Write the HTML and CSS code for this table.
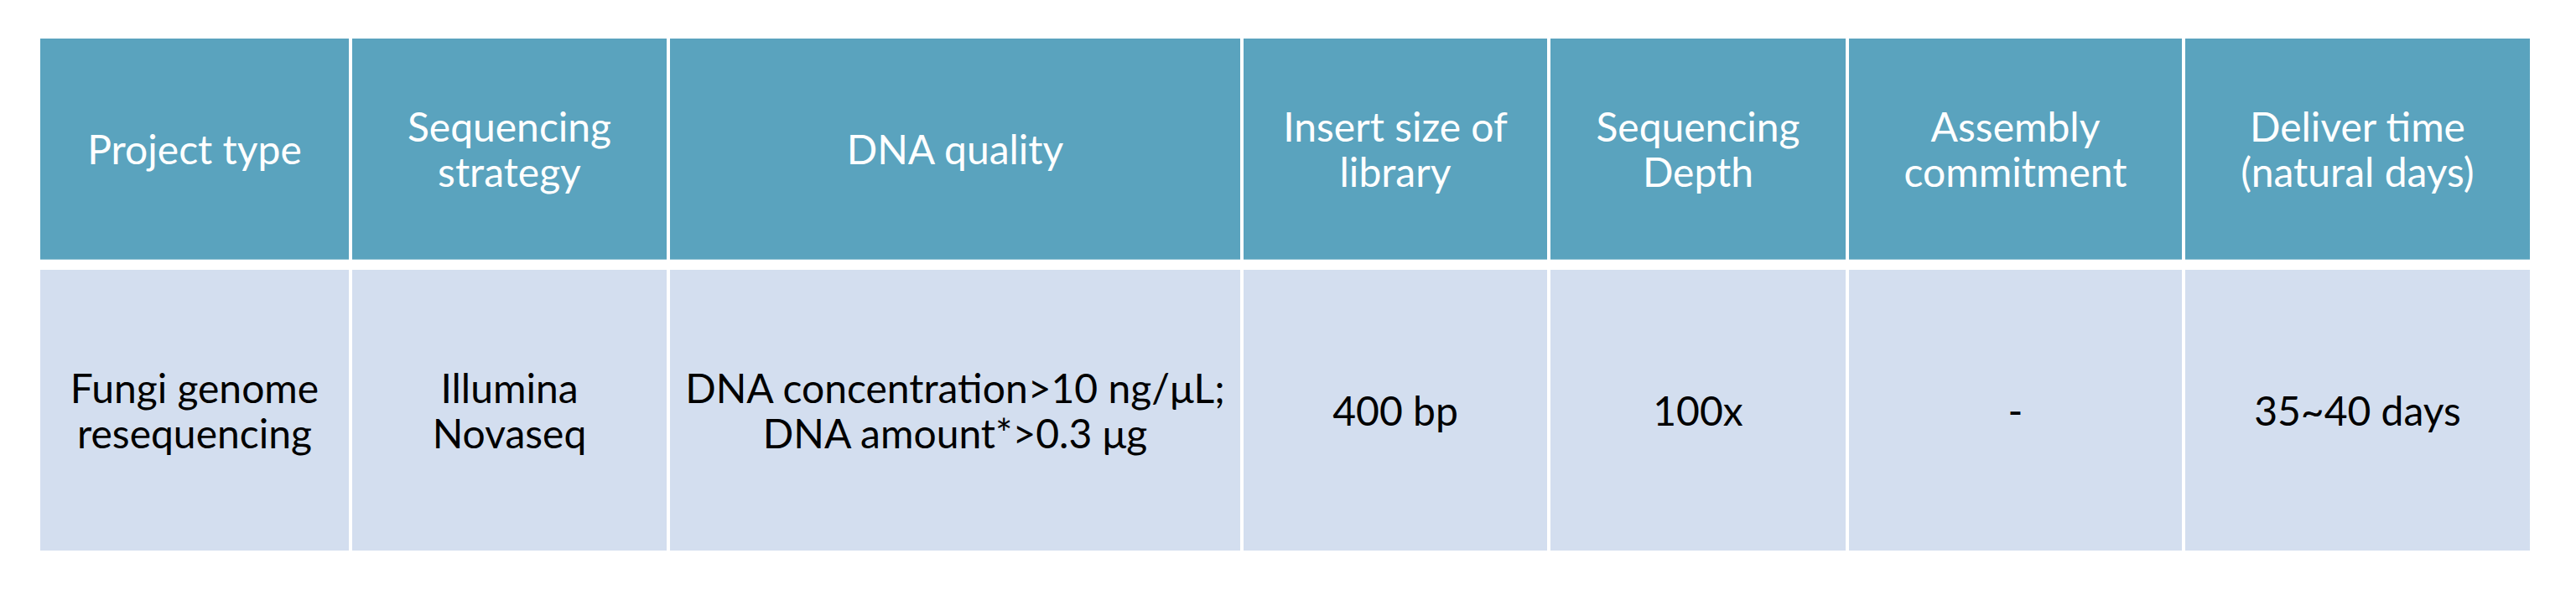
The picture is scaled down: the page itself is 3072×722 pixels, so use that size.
FILE: index.html
```html
<!DOCTYPE html>
<html lang="en">
<head>
<meta charset="utf-8">
<title>Fungi genome resequencing</title>
<link rel="stylesheet" href="styles.css">
</head>
<body>
<div class="page">
  <div class="table">
    <div class="row head">
      <div class="cell">Project type</div>
      <div class="cell">Sequencing<br>strategy</div>
      <div class="cell">DNA quality</div>
      <div class="cell">Insert size of<br>library</div>
      <div class="cell">Sequencing<br>Depth</div>
      <div class="cell">Assembly<br>commitment</div>
      <div class="cell">Deliver time<br>(natural days)</div>
    </div>
    <div class="row body">
      <div class="cell">Fungi genome<br>resequencing</div>
      <div class="cell">Illumina<br>Novaseq</div>
      <div class="cell">DNA concentration&gt;10 ng/μL;<br>DNA amount*&gt;0.3 μg</div>
      <div class="cell">400 bp</div>
      <div class="cell">100x</div>
      <div class="cell">-</div>
      <div class="cell">35~40 days</div>
    </div>
  </div>
</div>
</body>
</html>
```
FILE: styles.css
```css
html, body {
  margin: 0;
  padding: 0;
  background: #ffffff;
}
.page {
  padding: 46px 0 0 48px;
  font-family: Lato, "Liberation Sans", sans-serif;
  font-size: 48px;
  line-height: 54px;
}
.table {
  display: flex;
  flex-direction: column;
  gap: 12px;
  width: 2969px;
}
.row {
  display: grid;
  grid-template-columns: 368px 375px 680px 362px 352px 397px 411px;
  column-gap: 4px;
}
.cell {
  display: flex;
  align-items: center;
  justify-content: center;
  text-align: center;
}
.head .cell {
  height: 263px;
  background: #5aa3be;
  color: #ffffff;
  border-bottom: 1px solid #8ec0d3;
}
.body .cell {
  height: 335px;
  background: #d3deef;
  color: #000000;
}
```
